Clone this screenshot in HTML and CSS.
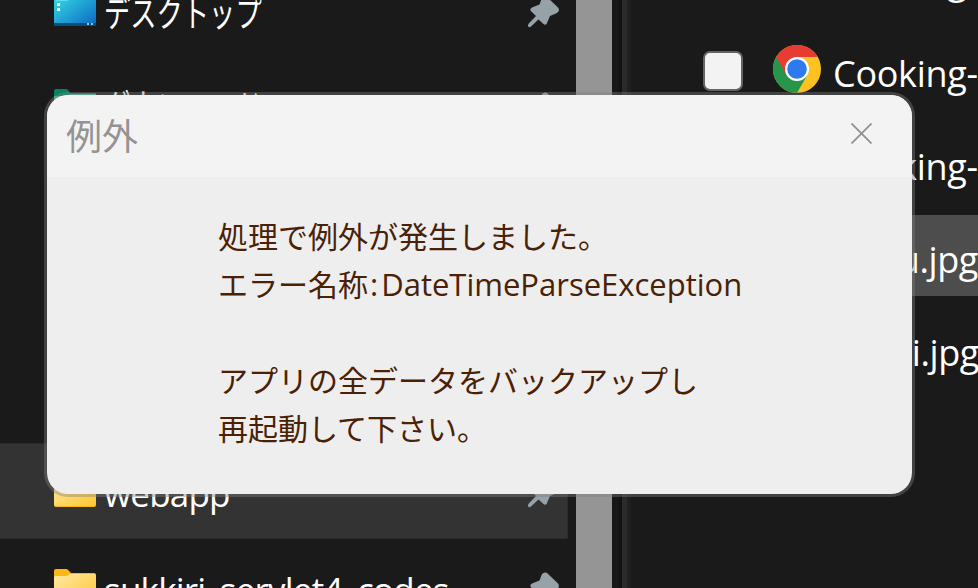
FILE: index.html
```
<!DOCTYPE html>
<html lang="ja">
<head>
<meta charset="utf-8">
<title>例外</title>
<link rel="stylesheet" href="styles.css">
</head>
<body>
<svg class="defs" aria-hidden="true">
  <defs>
    <linearGradient id="desk" x1="0" y1="0" x2="1" y2="1"><stop offset="0" stop-color="#37e2e8"/><stop offset="1" stop-color="#0b66c3"/></linearGradient>
    <linearGradient id="fold" x1="0" y1="0" x2="1" y2="1"><stop offset="0" stop-color="#ffe9a6"/><stop offset="1" stop-color="#ffc730"/></linearGradient>
    <symbol id="folder" viewBox="0 0 42 34">
      <path d="M0 2Q0 0 2 0H12Q14 0 15 2L17 4H40Q42 4 42 6V32Q42 34 40 34H2Q0 34 0 32Z" fill="#fbb814"/>
      <path d="M0 9Q0 7 2 7H12Q14 7 16 5H40Q42 5 42 7V31Q42 33 40 33H2Q0 33 0 31Z" fill="url(#fold)"/>
    </symbol>
    <symbol id="pin" viewBox="0 0 32 32">
      <path d="M13.500 3Q15 -.5 18.800 .8L30 11.500Q32.500 15.200 28.500 17.200L22 20L18.800 27.500Q17.500 29.600 15.500 28L10.500 23.500L3 30.500Q1 31.800 .2 30.500Q-.5 29 1 27.200L8 20L2.800 15Q1.500 12.800 4 11.500L11.500 8.500Z" fill="#96a1a8"/>
    </symbol>
  </defs>
</svg>
<div class="explorer">
  <nav class="sidebar">
    <div class="row">
      <svg class="icon desktop" viewBox="0 0 42 34"><rect y="1" width="42" height="33" rx="2" fill="url(#desk)"/><path d="M0 31H42V32Q42 34 40 34H2Q0 34 0 32Z" fill="#064d82"/><path d="M2 8H14" stroke="#8df4f5"/><path d="M3 11h3v3h-3zM3 16h3v3h-3z" fill="#fff"/><path d="M33 31h2v2h-2zM37 31h2v2h-2z" fill="#9dc5de"/></svg>
      <span class="label kana">デスクトップ</span>
      <svg class="pin"><use href="#pin"/></svg>
    </div>
    <div class="row">
      <svg class="icon" viewBox="0 0 42 34"><path d="M0 2Q0 0 2 0H12Q14 0 16 4H42V34H0Z" fill="#078562"/><path d="M0 7H12L16 5H42V34H0Z" fill="#43b99a"/></svg>
      <span class="label kana downloads">ダウンロード</span>
      <svg class="pin"><use href="#pin"/></svg>
    </div>
    <div class="row"></div>
    <div class="row"></div>
    <div class="row"></div>
    <div class="row current">
      <svg class="icon"><use href="#folder"/></svg>
      <span class="label">webapp</span>
      <svg class="pin"><use href="#pin"/></svg>
    </div>
    <div class="row">
      <svg class="icon"><use href="#folder"/></svg>
      <span class="label">sukkiri_servlet4_codes</span>
      <svg class="pin"><use href="#pin"/></svg>
    </div>
  </nav>
  <div class="scrollbar"></div>
  <div class="splitter"></div>
  <main class="files">
    <div class="file"><span class="name">Cooking-</span></div>
    <div class="file">
      <span class="check"></span>
      <svg class="chrome" viewBox="0 0 48 48">
        <circle cx="24" cy="24" r="24" fill="#fdc221"/>
        <path d="M24 24L34.400 30L24 48A24 24 0 0 1 3.200 12Z" fill="#27964a"/>
        <path d="M3.200 12A24 24 0 0 1 44.800 12H24V24L13.600 30Z" fill="#e63c31"/>
        <circle cx="24" cy="24" r="12" fill="#fff"/><circle cx="24" cy="24" r="9.800" fill="#2d7aee"/>
      </svg>
      <span class="name">Cooking-</span>
    </div>
    <div class="file"><span class="name">Cooking-</span></div>
    <div class="file selected"><span class="name tail">u.jpg</span></div>
    <div class="file"><span class="name tail last">i.jpg</span></div>
  </main>
</div>
<section class="dialog" role="dialog">
  <header class="titlebar">
    <h1>例外</h1>
    <svg class="close" viewBox="0 0 20 20"><path d="M.5 .5L19.500 19.500M19.500 .5L.5 19.500" stroke="#919191" stroke-width="1.700" fill="none"/></svg>
  </header>
  <div class="message">
    <p>処理で例外が発生しました。<br>エラー名称<span class="latin"><span class="colon">:</span>DateTimeParseException</span></p>
    <p>アプリの全データをバックアップし<br>再起動して下さい。</p>
  </div>
</section>
</body>
</html>
```

FILE: styles.css
```
* { box-sizing: border-box; }
body {
  margin: 0;
  width: 978px;
  height: 588px;
  overflow: hidden;
  background: #1a1a1a;
  color: #fff;
  font-family: "Open Sans", "Noto Sans CJK JP", sans-serif;
}
.defs { position: absolute; width: 0; height: 0; }
.explorer { display: flex; height: 588px; overflow: hidden; }
.sidebar { width: 576px; flex: none; margin-top: -37px; padding-right: 8px; background: #1a1a1a; }
.row { display: flex; align-items: flex-start; height: 96px; padding: 30px 8px 0 54px; }
.current { background: #333; border: solid #2b2b2b; border-width: 1px 1px 1px 0; padding-top: 29px; padding-right: 7px; }
.icon { width: 42px; height: 34px; flex: none; }
.desktop { margin-top: -1px; }
.label { margin-left: 8px; font-size: 35px; line-height: 48px; letter-spacing: -.8px; white-space: nowrap; width: 400px; margin-top: -3px; transform-origin: left; }
.kana { font-family: "Noto Sans CJK JP", sans-serif; font-size: 36px; letter-spacing: 0; margin-top: -6px; transform: scaleX(.73); }
.downloads { margin-top: -8px; }
.pin { width: 32px; height: 32px; flex: none; margin: 3px 0 0 auto; }
.scrollbar { width: 36px; flex: none; background: #959595; }
.splitter { width: 19px; flex: none; background: linear-gradient(90deg, #171717 0 7px, #121212 7px 10px, #2b2b2b 10px 15px, #202020 15px); }
.files { flex: 1; min-width: 0; margin-top: -64px; display: flex; flex-direction: column; gap: 12px; }
.file { display: flex; align-items: center; height: 81px; padding-left: 72px; flex: none; }
.selected { background: #4d4d4d; }
.check { width: 40px; height: 40px; border: 2px solid #646464; border-radius: 7px; background: #f3f3f3; margin-top: 2px; }
.chrome { width: 48px; height: 48px; margin: -1px 0 0 30px; }
.name { font-size: 36px; line-height: 48px; letter-spacing: -.3px; margin-left: 130px; white-space: nowrap; padding-top: 8px; }
.chrome + .name { margin-left: 12px; }
.name.tail { margin-left: auto; margin-right: 0; letter-spacing: -.4px; }
.name.last { margin-right: -1px; }
.dialog {
  position: absolute;
  left: 44px;
  top: 92px;
  width: 871px;
  height: 405px;
  border: 3px solid rgba(128, 128, 128, .4);
  border-radius: 24px;
  background: #eee;
  background-clip: padding-box;
  overflow: hidden;
  font-family: "Noto Sans CJK JP", sans-serif;
}
.titlebar { display: flex; justify-content: space-between; align-items: center; height: 82px; padding: 0 40px 4px 19px; background: #f3f3f3; }
.titlebar h1 { margin: 0; font-size: 36px; line-height: 50px; font-weight: 400; color: #939393; }
.close { width: 21px; height: 21px; margin-top: -1px; }
.message { padding: 34px 0 0 171px; color: #4a2105; font-size: 30px; line-height: 48px; }
.message p { margin: 0 0 48px; white-space: nowrap; }
.latin { font-family: "Open Sans", sans-serif; font-size: 31px; line-height: 1; }
.colon { margin: 0 3px 0 2px; }
```
